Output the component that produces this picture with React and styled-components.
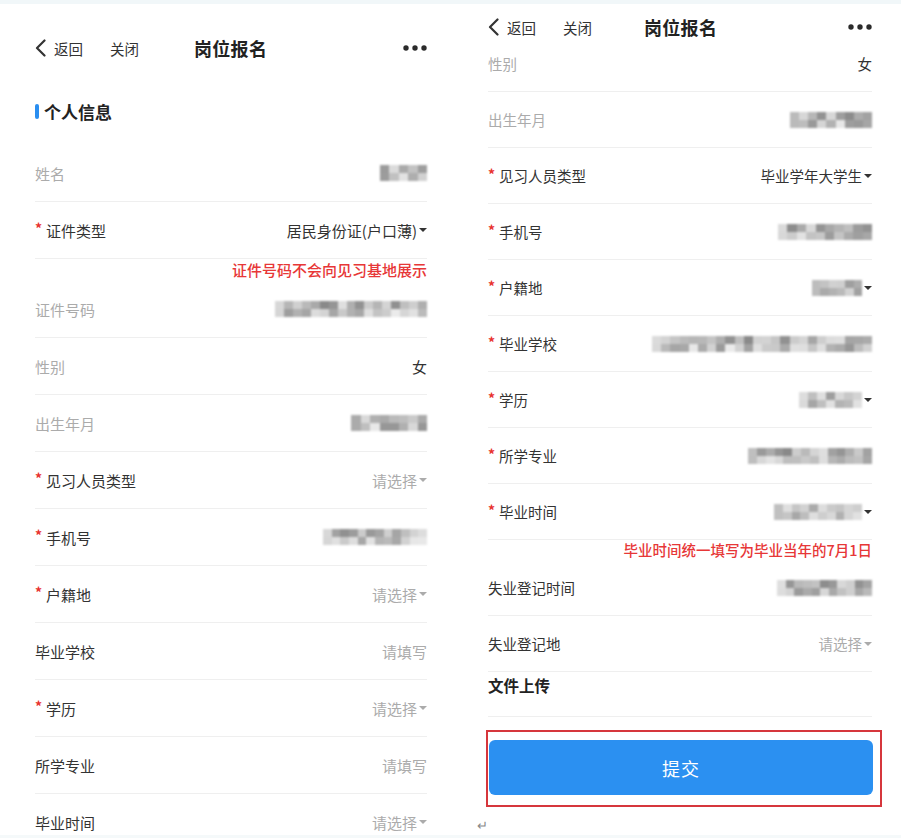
import styled, { createGlobalStyle } from "styled-components"

const GlobalStyle = createGlobalStyle`
  html, body {
    margin: 0;
    padding: 0;
    background: #fff;
  }
  body {
    font-family: "Noto Sans CJK SC", "Noto Sans", sans-serif;
    color: #333;
  }
`

// pseudo random shades for the pixelated (hidden) values
function shades(seed, count, min, max) {
  const out = []
  let s = seed * 9301 + 49297
  for (let i = 0; i < count; i++) {
    s = (s * 9301 + 49297) % 233280
    out.push(Math.round(min + (s / 233280) * (max - min)))
  }
  return out
}

function Mosaic({ width, seed = 1, dark = 135, light = 225 }) {
  const cols = Math.max(2, Math.round(width / 9))
  const top = shades(seed, cols, dark, light)
  const bottom = shades(seed + 7, cols, dark + 15, light + 10)
  return (
    <MosaicBox style={{ width }}>
      <MosaicLine>
        {top.map((g, i) => (
          <i key={i} style={{ background: `rgb(${g},${g},${g})` }} />
        ))}
      </MosaicLine>
      <MosaicLine>
        {bottom.map((g, i) => (
          <i key={i} style={{ background: `rgb(${g},${g},${g})` }} />
        ))}
      </MosaicLine>
    </MosaicBox>
  )
}

function Chevron() {
  return (
    <svg width="11" height="18" viewBox="0 0 11 18">
      <polyline points="9.5,1.5 2,9 9.5,16.5" fill="none" stroke="#333" strokeWidth="2.2" strokeLinecap="round" strokeLinejoin="round" />
    </svg>
  )
}

function MoreDots() {
  return (
    <svg width="24" height="6" viewBox="0 0 24 6">
      <circle cx="3" cy="3" r="2.7" fill="#2b2b2b" />
      <circle cx="12" cy="3" r="2.7" fill="#2b2b2b" />
      <circle cx="21" cy="3" r="2.7" fill="#2b2b2b" />
    </svg>
  )
}

function NavBar({ height, titleGap = 55 }) {
  return (
    <Nav $h={height}>
      <Chevron />
      <NavLink $first>返回</NavLink>
      <NavLink>关闭</NavLink>
      <NavTitle $gap={titleGap}>岗位报名</NavTitle>
      <NavSpacer />
      <MoreDots />
    </Nav>
  )
}

function Field({ label, required, muted, value, tone = "dark", caret, blur, seed, compact }) {
  return (
    <Row $compact={compact}>
      <Label $muted={muted}>
        {required && <Star>*</Star>}
        {label}
      </Label>
      <Value $tone={tone}>
        {blur ? <Mosaic width={blur} seed={seed} /> : value}
        {caret && <Caret />}
      </Value>
    </Row>
  )
}

export default function App() {
  return (
    <>
      <GlobalStyle />
      <Page>
        <Strip />
        <Screens>
          <Screen $w={450} $pl={35} $pr={23}>
            <NavBar height={88} />
            <SectionTitle>
              <SectionBar />
              个人信息
            </SectionTitle>
            <Field label="姓名" muted blur={47} seed={3} />
            <Field label="证件类型" required value="居民身份证(户口薄)" caret />
            <Note>证件号码不会向见习基地展示</Note>
            <Field label="证件号码" muted blur={152} seed={5} />
            <Field label="性别" muted value="女" />
            <Field label="出生年月" muted blur={76} seed={8} />
            <Field label="见习人员类型" required value="请选择" tone="hint" caret />
            <Field label="手机号" required blur={104} seed={11} />
            <Field label="户籍地" required value="请选择" tone="hint" caret />
            <Field label="毕业学校" value="请填写" tone="hint" />
            <Field label="学历" required value="请选择" tone="hint" caret />
            <Field label="所学专业" value="请填写" tone="hint" />
            <Field label="毕业时间" value="请选择" tone="hint" caret />
          </Screen>

          <Screen $w={451} $pl={38} $pr={29}>
            <NavBar height={46} titleGap={52} />
            <Scrolled>
              <Field compact label="性别" muted value="女" />
              <Field compact label="出生年月" muted blur={82} seed={13} />
              <Field compact label="见习人员类型" required value="毕业学年大学生" caret />
              <Field compact label="手机号" required blur={94} seed={17} />
              <Field compact label="户籍地" required blur={50} seed={19} caret />
              <Field compact label="毕业学校" required blur={220} seed={23} />
              <Field compact label="学历" required blur={63} seed={29} caret />
              <Field compact label="所学专业" required blur={124} seed={31} />
              <Field compact label="毕业时间" required blur={88} seed={37} caret />
              <Note $compact>毕业时间统一填写为毕业当年的7月1日</Note>
              <Field compact label="失业登记时间" blur={95} seed={41} />
              <Field compact label="失业登记地" value="请选择" tone="hint" caret />
              <UploadBlock>文件上传</UploadBlock>
              <Highlight>
                <SubmitButton>提交</SubmitButton>
              </Highlight>
              <ReturnMark>↵</ReturnMark>
            </Scrolled>
          </Screen>
        </Screens>
        <Strip $bottom />
      </Page>
    </>
  )
}

const Page = styled.div`
  width: 901px;
  height: 838px;
  overflow: hidden;
  display: flex;
  flex-direction: column;
  background: #fff;
`

const Strip = styled.div`
  flex-shrink: 0;
  height: ${p => (p.$bottom ? 3 : 4)}px;
  background: ${p => (p.$bottom ? "#f5f9fa" : "#f1f7f9")};
`

const Screens = styled.div`
  display: flex;
  flex: 1;
  min-height: 0;
`

const Screen = styled.div`
  width: ${p => p.$w}px;
  flex-shrink: 0;
  box-sizing: border-box;
  padding: 0 ${p => p.$pr}px 0 ${p => p.$pl}px;
  display: flex;
  flex-direction: column;
  overflow: hidden;
`

const Nav = styled.div`
  height: ${p => p.$h}px;
  flex-shrink: 0;
  display: flex;
  align-items: center;
`

const NavLink = styled.span`
  font-size: 14.5px;
  color: #333;
  margin-left: ${p => (p.$first ? 8 : 27)}px;
`

const NavTitle = styled.span`
  margin-left: ${p => p.$gap}px;
  font-size: 18px;
  font-weight: 700;
  letter-spacing: 0.3px;
  color: #222;
`

const NavSpacer = styled.div`
  flex: 1;
`

const SectionTitle = styled.div`
  flex-shrink: 0;
  height: 24px;
  padding: 7px 0 22px;
  display: flex;
  align-items: center;
  gap: 5px;
  font-size: 17px;
  font-weight: 700;
  color: #222;
`

const SectionBar = styled.span`
  width: 4px;
  height: 15px;
  border-radius: 2px;
  background: #2a8ef0;
`

const Row = styled.div`
  flex-shrink: 0;
  height: ${p => (p.$compact ? 55 : 56)}px;
  border-bottom: 1px solid #efefef;
  display: flex;
  align-items: center;
  justify-content: space-between;
  font-size: ${p => (p.$compact ? 14.5 : 15)}px;
`

const Label = styled.span`
  display: flex;
  align-items: center;
  color: ${p => (p.$muted ? "#ababab" : "#333")};
`

const Star = styled.span`
  width: 11px;
  color: #e8322f;
  font-size: 14px;
  font-weight: 700;
  position: relative;
  top: -2px;
`

const Value = styled.span`
  display: flex;
  align-items: center;
  color: ${p => (p.$tone === "hint" ? "#ababab" : "#333")};
`

const Caret = styled.span`
  margin-left: 2px;
  width: 0;
  height: 0;
  border-left: 4px solid transparent;
  border-right: 4px solid transparent;
  border-top: 4.5px solid currentColor;
`

const MosaicBox = styled.span`
  display: flex;
  flex-direction: column;
  height: 16px;
  filter: blur(1.3px);
`

const MosaicLine = styled.span`
  display: flex;
  flex: 1;
  & > i {
    flex: 1;
  }
`

const Note = styled.div`
  flex-shrink: 0;
  height: ${p => (p.$compact ? 20 : 22)}px;
  line-height: ${p => (p.$compact ? 20 : 22)}px;
  text-align: right;
  font-size: ${p => (p.$compact ? 14.5 : 15)}px;
  font-weight: 500;
  color: #e73737;
`

const Scrolled = styled.div`
  margin-top: -14px;
  display: flex;
  flex-direction: column;
`

const UploadBlock = styled.div`
  flex-shrink: 0;
  padding-top: 2px;
  box-sizing: border-box;
  height: 45px;
  line-height: 22px;
  border-bottom: 1px solid #efefef;
  font-size: 15.5px;
  font-weight: 700;
  color: #222;
`

const Highlight = styled.div`
  flex-shrink: 0;
  margin: 13px -10px 0 -2px;
  padding: 8px 8px 10px 0;
  border: 2px solid #d6363c;
`

const SubmitButton = styled.button`
  display: block;
  width: 100%;
  height: 55px;
  margin-left: 1px;
  border: none;
  border-radius: 6px;
  background: #2b90f1;
  color: #fff;
  font-family: "Noto Sans CJK SC", "Noto Sans", sans-serif;
  font-size: 18px;
  letter-spacing: 1px;
`

const ReturnMark = styled.div`
  flex-shrink: 0;
  margin: 10px 0 0 -11px;
  font-size: 13px;
  line-height: 16px;
  color: #888;
`
